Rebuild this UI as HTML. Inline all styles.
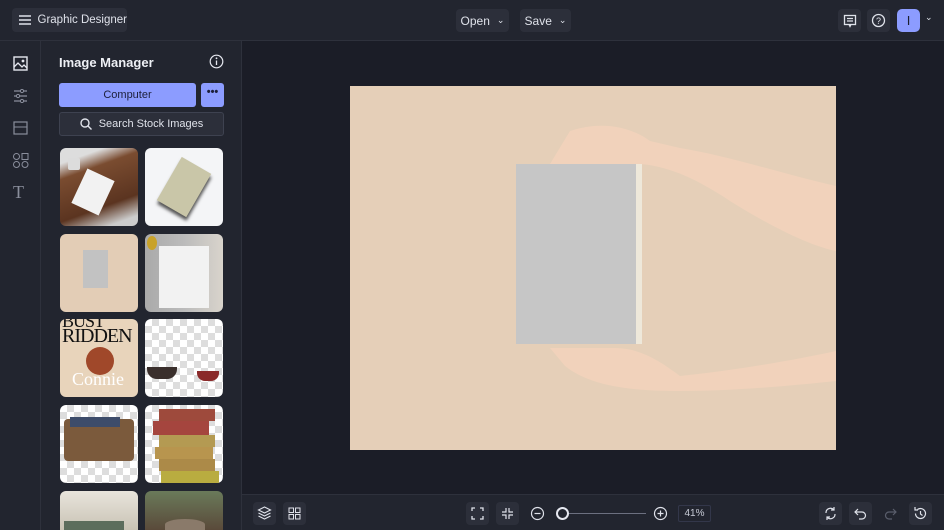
<!DOCTYPE html>
<html style="width:944px;height:530px;overflow:hidden"><head><style>
*{margin:0;padding:0;box-sizing:border-box}
body{width:944px;height:530px;overflow:hidden;background:#1b1d27;font-family:"Liberation Sans",sans-serif;color:#e6e8f0;position:relative;white-space:nowrap}
.top{position:absolute;left:0;top:0;width:944px;height:41px;background:#22252f;border-bottom:1px solid #2e313c}
.btn{position:absolute;background:#2c2f3a;border-radius:4px;color:#dfe2ea;font-size:12px;display:flex;align-items:center;justify-content:center}
.rail{position:absolute;left:0;top:41px;width:41px;height:489px;background:#22252f;border-right:1px solid #2e313c}
.panel{position:absolute;left:41px;top:41px;width:201px;height:489px;background:#22252f;border-right:1px solid #2e313c;overflow:hidden}
.th{position:absolute;width:78px;height:78px;border-radius:6px;overflow:hidden}
.chk{background-color:#fff;background-image:linear-gradient(45deg,#ddd 25%,transparent 25%,transparent 75%,#ddd 75%),linear-gradient(45deg,#ddd 25%,transparent 25%,transparent 75%,#ddd 75%);background-size:14px 14px;background-position:0 0,7px 7px}
.bottom{position:absolute;left:242px;top:494px;width:702px;height:36px;background:#22252f;border-top:1px solid #2e313c}
.ib{position:absolute;top:7px;width:23px;height:23px;background:#2c2f3a;border-radius:4px}
svg{display:block}
</style></head><body>
<div class="top">
 <div class="btn" style="left:12px;top:8px;width:115px;height:24px;justify-content:flex-start;padding-left:6px">
  <svg width="14" height="12"><path d="M1 2h12M1 6h12M1 10h12" stroke="#dfe2ea" stroke-width="1.5"/></svg>
  <span style="margin-left:6px;font-size:11.5px">Graphic Designer</span></div>
 <div class="btn" style="left:456px;top:9px;width:53px;height:23px">Open <span style="margin-left:7px;font-size:9px">&#8964;</span></div>
 <div class="btn" style="left:520px;top:9px;width:51px;height:23px">Save <span style="margin-left:7px;font-size:9px">&#8964;</span></div>
 <div class="btn" style="left:838px;top:9px;width:23px;height:23px"><svg width="14" height="14"><rect x="1.5" y="1.5" width="11" height="9" fill="none" stroke="#dfe2ea" stroke-width="1.3"/><path d="M4 4.5h6M4 7h6M6 10.5l1 2 1-2" stroke="#dfe2ea" stroke-width="1.2" fill="none"/></svg></div>
 <div class="btn" style="left:867px;top:9px;width:23px;height:23px"><svg width="15" height="15"><circle cx="7.5" cy="7.5" r="6" fill="none" stroke="#dfe2ea" stroke-width="1.3"/><text x="7.5" y="11" font-size="9" text-anchor="middle" fill="#dfe2ea" font-family="Liberation Sans">?</text></svg></div>
 <div class="btn" style="left:897px;top:9px;width:23px;height:23px;background:#8c9cff;color:#1c1f2e;font-size:13px;border-radius:5px">I</div>
 <div style="position:absolute;left:925px;top:12px;font-size:9px;color:#dfe2ea">&#8964;</div>
</div>
<div class="rail">
 <svg style="position:absolute;left:13px;top:15px" width="15" height="15"><rect x="1" y="1" width="13" height="13" fill="none" stroke="#e6e8f0" stroke-width="1.4"/><path d="M1 11l4-4 4 4 2-2 3 3" stroke="#e6e8f0" fill="none" stroke-width="1.3"/><circle cx="10" cy="5" r="1.4" fill="#e6e8f0"/></svg>
 <svg style="position:absolute;left:13px;top:48px" width="15" height="14"><path d="M1 2h13M1 7h13M1 12h13" stroke="#8a8e9c" stroke-width="1.2"/><circle cx="9" cy="2" r="1.6" fill="#22252f" stroke="#8a8e9c"/><circle cx="5" cy="7" r="1.6" fill="#22252f" stroke="#8a8e9c"/><circle cx="9" cy="12" r="1.6" fill="#22252f" stroke="#8a8e9c"/></svg>
 <svg style="position:absolute;left:13px;top:80px" width="15" height="14"><rect x="1" y="1" width="13" height="12" fill="none" stroke="#8a8e9c" stroke-width="1.2"/><path d="M1 6h13" stroke="#8a8e9c"/></svg>
 <svg style="position:absolute;left:12px;top:111px" width="17" height="17"><circle cx="4.5" cy="4.5" r="3" fill="none" stroke="#8a8e9c"/><rect x="10" y="1.5" width="6" height="6" fill="none" stroke="#8a8e9c"/><circle cx="4.5" cy="12.5" r="3" fill="none" stroke="#8a8e9c"/><circle cx="13" cy="12.5" r="3" fill="none" stroke="#8a8e9c"/></svg>
 <div style="position:absolute;left:13px;top:141px;font-size:18px;color:#8a8e9c;font-family:'Liberation Serif',serif">T</div>
</div>
<div class="panel">
 <div style="position:absolute;left:18px;top:14px;font-size:13px;font-weight:bold;color:#eef0f5">Image Manager</div>
 <svg style="position:absolute;left:168px;top:13px" width="15" height="15"><circle cx="7.5" cy="7.5" r="6.3" fill="none" stroke="#e6e8f0" stroke-width="1.2"/><path d="M7.5 6.5v4.5" stroke="#e6e8f0" stroke-width="1.3"/><circle cx="7.5" cy="4.3" r=".9" fill="#e6e8f0"/></svg>
 <div style="position:absolute;left:18px;top:42px;width:137px;height:24px;background:#8c9cff;border-radius:3px;color:#1c1f3a;font-size:11px;display:flex;align-items:center;justify-content:center">Computer</div>
 <div style="position:absolute;left:160px;top:42px;width:23px;height:24px;background:#8c9cff;border-radius:3px;color:#1c1f3a;font-size:11px;font-weight:bold;text-align:center;line-height:18px">•••</div>
 <div style="position:absolute;left:18px;top:71px;width:165px;height:24px;background:#2c2f3a;border:1px solid #3e4250;border-radius:3px;font-size:11px;display:flex;align-items:center;justify-content:center;color:#dfe2ea">
  <svg width="12" height="12" style="margin-right:7px"><circle cx="5" cy="5" r="4" fill="none" stroke="#dfe2ea" stroke-width="1.4"/><path d="M8 8l3.5 3.5" stroke="#dfe2ea" stroke-width="1.4"/></svg>Search Stock Images</div>
 <div class="th" style="left:19px;top:107px;background:linear-gradient(160deg,#ddd 0,#ddd 15%,#7a4c30 30%,#5b3420 70%,#ccc 90%)"><div style="position:absolute;left:18px;top:25px;width:30px;height:38px;background:#f2f2f2;transform:rotate(25deg)"></div><div style="position:absolute;left:8px;top:10px;width:12px;height:12px;background:#dcdcdc;border-radius:2px"></div></div>
 <div class="th" style="left:104px;top:107px;background:#f4f5f7"><div style="position:absolute;left:22px;top:14px;width:34px;height:50px;background:#c9c6a8;transform:rotate(30deg);box-shadow:2px 3px 3px #555"></div></div>
 <div class="th" style="left:19px;top:193px;background:#e3cdb6"><div style="position:absolute;left:23px;top:16px;width:25px;height:38px;background:#c2c2c2"></div></div>
 <div class="th" style="left:104px;top:193px;background:linear-gradient(90deg,#aaa 0,#bbb 50%,#d9d4cc 100%)"><div style="position:absolute;left:14px;top:12px;width:50px;height:62px;background:#f2f2f2"></div><div style="position:absolute;left:2px;top:2px;width:10px;height:14px;background:#c8a22a;border-radius:50%"></div></div>
 <div class="th" style="left:19px;top:278px;background:#e8d4bb;color:#111;font-family:'Liberation Serif',serif"><div style="position:absolute;left:2px;top:-8px;font-size:18px;letter-spacing:-1px">BUST</div><div style="position:absolute;left:2px;top:6px;font-size:20px;letter-spacing:-1px">RIDDEN</div><div style="position:absolute;left:26px;top:28px;width:28px;height:28px;background:#a0482a;border-radius:50%"></div><div style="position:absolute;left:12px;top:50px;font-size:18px;color:#fff">Connie</div></div>
 <div class="th chk" style="left:104px;top:278px"><div style="position:absolute;left:2px;top:48px;width:30px;height:12px;background:#3a2f2c;border-radius:0 0 10px 10px"></div><div style="position:absolute;left:52px;top:52px;width:22px;height:10px;background:#8a2a2a;border-radius:0 0 8px 8px"></div></div>
 <div class="th chk" style="left:19px;top:364px"><div style="position:absolute;left:4px;top:14px;width:70px;height:42px;background:#7b5a3c;border-radius:4px"></div><div style="position:absolute;left:10px;top:12px;width:50px;height:10px;background:#3d4c6a"></div></div>
 <div class="th chk" style="left:104px;top:364px"><div style="position:absolute;left:14px;top:4px;width:56px;height:12px;background:#9e4a3c"></div><div style="position:absolute;left:8px;top:16px;width:56px;height:14px;background:#a5453e"></div><div style="position:absolute;left:14px;top:30px;width:56px;height:12px;background:#b49a52"></div><div style="position:absolute;left:10px;top:42px;width:58px;height:12px;background:#b8954e"></div><div style="position:absolute;left:14px;top:54px;width:56px;height:12px;background:#ac8a48"></div><div style="position:absolute;left:16px;top:66px;width:58px;height:12px;background:#b9ac40"></div></div>
 <div class="th" style="left:19px;top:450px;height:39px;border-radius:6px 6px 0 0;background:linear-gradient(180deg,#e8e4dc,#c9c3b4)"><div style="position:absolute;left:4px;top:30px;width:60px;height:9px;background:#5c6d5c"></div></div>
 <div class="th" style="left:104px;top:450px;height:39px;border-radius:6px 6px 0 0;background:linear-gradient(180deg,#6a7a5a,#5a4a3a)"><div style="position:absolute;left:20px;top:28px;width:40px;height:11px;background:#8a7a6a;border-radius:50% 50% 0 0"></div></div>
</div>
<div style="position:absolute;left:350px;top:86px;width:486px;height:364px;background:#e5cfb8;overflow:hidden">
 <svg width="486" height="364" style="position:absolute;left:0;top:0">
  <path d="M486 100 C440 90 380 70 330 62 L300 55 C280 40 250 35 220 45 L200 78 L290 78 C320 80 350 95 380 115 C420 140 460 160 486 165 Z" fill="#f1d2bb"/>
  <path d="M486 265 C440 275 380 285 330 290 C310 275 290 262 265 262 L200 262 L215 280 C240 300 280 305 330 305 C380 305 440 300 486 295 Z" fill="#f1d2bb"/>
 </svg>
 <div style="position:absolute;left:166px;top:78px;width:126px;height:180px;background:#eee8da"></div>
 <div style="position:absolute;left:166px;top:78px;width:120px;height:180px;background:#c6c6c6"></div>
</div>
<div class="bottom">
 <div class="ib" style="left:11px"><svg width="23" height="23"><path d="M11.5 5l6 3-6 3-6-3z M5.5 11l6 3 6-3 M5.5 14l6 3 6-3" fill="none" stroke="#dfe2ea" stroke-width="1.1"/></svg></div>
 <div class="ib" style="left:41px"><svg width="23" height="23"><rect x="6" y="6" width="4.5" height="4.5" fill="none" stroke="#dfe2ea"/><rect x="12.5" y="6" width="4.5" height="4.5" fill="none" stroke="#dfe2ea"/><rect x="6" y="12.5" width="4.5" height="4.5" fill="none" stroke="#dfe2ea"/><rect x="12.5" y="12.5" width="4.5" height="4.5" fill="none" stroke="#dfe2ea"/></svg></div>
 <div class="ib" style="left:224px"><svg width="23" height="23"><path d="M6 9V6h3M14 6h3v3M17 14v3h-3M9 17H6v-3" fill="none" stroke="#dfe2ea" stroke-width="1.3"/></svg></div>
 <div class="ib" style="left:254px"><svg width="23" height="23"><path d="M6 10h4V6M17 13h-4v4M13 6v4h4M6 13h4v4" fill="none" stroke="#dfe2ea" stroke-width="1.2"/></svg></div>
 <svg style="position:absolute;left:288px;top:11px" width="15" height="15"><circle cx="7.5" cy="7.5" r="6" fill="none" stroke="#dfe2ea" stroke-width="1.2"/><path d="M4.5 7.5h6" stroke="#dfe2ea" stroke-width="1.2"/></svg>
 <div style="position:absolute;left:316px;top:18px;width:88px;height:1px;background:#6c7080"></div>
 <div style="position:absolute;left:314px;top:12px;width:13px;height:13px;border:2px solid #e6e8f0;border-radius:50%;background:#22252f"></div>
 <svg style="position:absolute;left:411px;top:11px" width="15" height="15"><circle cx="7.5" cy="7.5" r="6" fill="none" stroke="#dfe2ea" stroke-width="1.2"/><path d="M4.5 7.5h6M7.5 4.5v6" stroke="#dfe2ea" stroke-width="1.2"/></svg>
 <div style="position:absolute;left:436px;top:10px;width:33px;height:17px;border:1px solid #33374a;border-radius:2px;font-size:10px;color:#c8cbd6;text-align:center;line-height:15px">41%</div>
 <div class="ib" style="left:577px"><svg width="23" height="23"><path d="M7 11a4.5 4.5 0 0 1 8-3M16 12a4.5 4.5 0 0 1-8 3M15 5v3h-3M8 18v-3h3" fill="none" stroke="#dfe2ea" stroke-width="1.2"/></svg></div>
 <div class="ib" style="left:607px"><svg width="23" height="23"><path d="M9 7L6 10l3 3M6 10h7a3.5 3.5 0 0 1 0 7h-3" fill="none" stroke="#dfe2ea" stroke-width="1.2"/></svg></div>
 <svg style="position:absolute;left:637px;top:7px" width="23" height="23"><path d="M14 7l3 3-3 3M17 10h-7a3.5 3.5 0 0 0 0 7h3" fill="none" stroke="#5a5e6c" stroke-width="1.2"/></svg>
 <div class="ib" style="left:667px"><svg width="23" height="23"><path d="M6.5 11.5a5 5 0 1 0 2-4M6 5v3h3M11.5 9v3l2 1.5" fill="none" stroke="#dfe2ea" stroke-width="1.2"/></svg></div>
</div>
</body></html>
